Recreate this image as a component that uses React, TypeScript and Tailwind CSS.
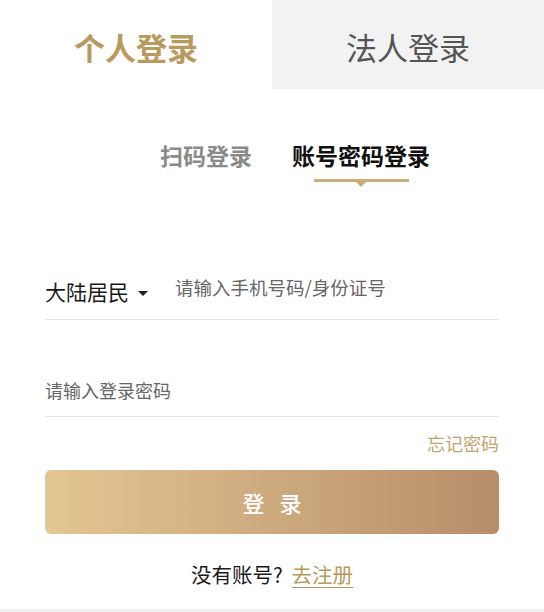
import React from "react";

export default function App() {
  const font = { fontFamily: '"Noto Sans CJK SC", "Noto Sans", sans-serif' };
  return (
    <div className="relative w-[544px] h-[612px] overflow-hidden bg-white" style={font}>
      {/* top tabs */}
      <div className="flex h-[89px]">
        <div className="flex-1 flex items-center justify-center pt-[3px] bg-white">
          <span className="text-[31px] leading-[31px] font-bold text-[#b99a5e]">个人登录</span>
        </div>
        <div className="flex-1 flex items-center justify-center pt-[3px] bg-[#f2f2f2]">
          <span className="text-[31px] leading-[31px] text-[#555555]">法人登录</span>
        </div>
      </div>

      {/* sub tabs */}
      <div className="flex justify-center items-start gap-[40px] pl-[46px] mt-[55px]">
        <span className="text-[23px] leading-[23px] font-bold text-[#8a8a8a]">扫码登录</span>
        <div className="flex flex-col items-center">
          <span className="text-[23px] leading-[23px] font-bold text-[#111111]">账号密码登录</span>
          <div className="mt-[12px] w-[95px] h-[3px] bg-[#c9ad7a]" />
          <div className="w-0 h-0 border-l-[5px] border-r-[5px] border-t-[5px] border-l-transparent border-r-transparent border-t-[#c9ad7a]" />
        </div>
      </div>

      {/* form */}
      <div className="px-[45px]">
        <div className="mt-[83px] h-[50px] border-b border-[#e3e3e3] flex items-start">
          <div className="flex items-center mt-[11px]">
            <span className="text-[21px] leading-[21px] text-[#1a1a1a]">大陆居民</span>
            <span className="ml-[9px] mt-[4px] w-0 h-0 border-l-[5px] border-r-[5px] border-t-[5px] border-l-transparent border-r-transparent border-t-[#222222]" />
          </div>
          <span className="ml-[27px] mt-[8px] text-[18.5px] leading-[18px] text-[#666666]">请输入手机号码/身份证号</span>
        </div>
        <div className="h-[97px] border-b border-[#e3e3e3] pt-[61px]">
          <span className="block text-[18px] leading-[18px] text-[#666666]">请输入登录密码</span>
        </div>
        <div className="flex justify-end mt-[17px]">
          <span className="text-[18px] leading-[18px] text-[#c2a46f]">忘记密码</span>
        </div>
        <button className="mt-[18px] w-full h-[64px] rounded-[6px] bg-gradient-to-r from-[#e4c692] to-[#b68e6a] flex items-center justify-center gap-[15px] text-white text-[22px] leading-[22px] font-medium">
          <span>登</span>
          <span>录</span>
        </button>
        <div className="mt-[30px] flex justify-center items-start text-[20.5px] leading-[20px]">
          <span className="text-[#1a1a1a]">没有账号?</span>
          <span className="ml-[9px] text-[#b99a5e] underline underline-offset-[4px] decoration-[1px]">去注册</span>
        </div>
      </div>

      <div className="absolute left-0 right-0 bottom-0 h-[3px] bg-[#f0f0f0]" />
    </div>
  );
}
